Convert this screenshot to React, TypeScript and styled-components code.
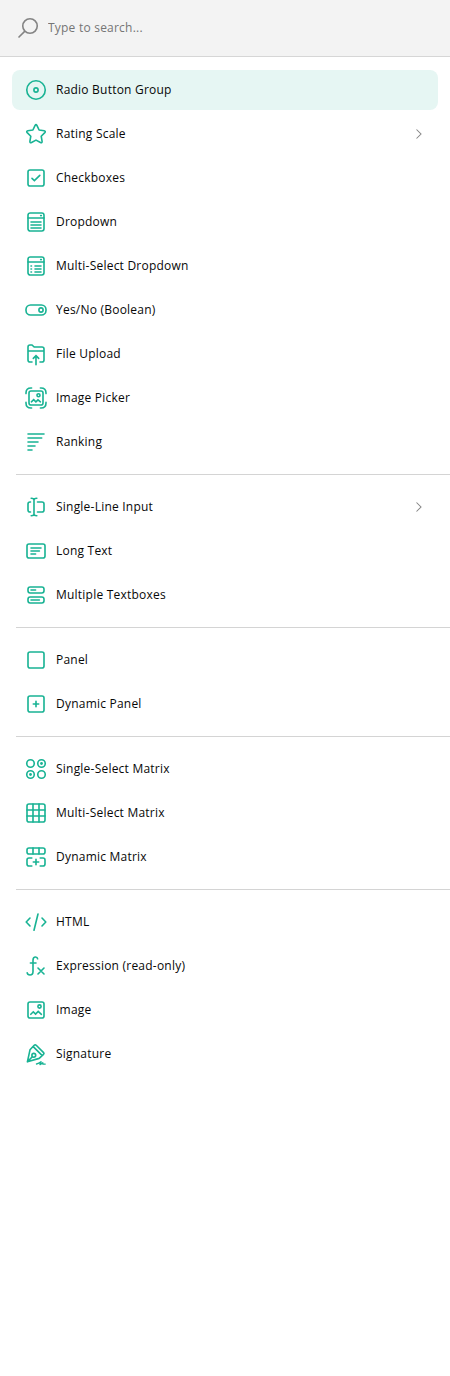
import React from 'react';
import styled, { createGlobalStyle } from 'styled-components';

const GlobalStyle = createGlobalStyle`
  * { box-sizing: border-box; }
  body { margin: 0; background: #fff; }
`;

const Toolbox = styled.div`
  width: 100%;
  min-height: 100vh;
  background: #fff;
  font-family: 'Open Sans', sans-serif;
  font-size: 12px;
  letter-spacing: 0.22px;
  color: #080808;
`;

const SearchBar = styled.label`
  display: flex;
  align-items: center;
  gap: 8px;
  height: 57px;
  padding: 0 16px 1px;
  background: #f3f3f3;
  border-bottom: 1px solid #d6d6d6;
`;

const SearchIcon = styled.svg`
  width: 24px;
  height: 24px;
  fill: none;
  stroke: #848484;
  stroke-width: 1.6;
`;

const SearchInput = styled.input`
  flex: 1;
  padding: 0;
  border: 0;
  outline: 0;
  background: transparent;
  font: inherit;
  letter-spacing: inherit;
  line-height: 18px;
  &::placeholder { color: #757575; opacity: 1; }
`;

const Categories = styled.nav`
  padding-top: 13px;
`;

const Category = styled.ul`
  display: flex;
  flex-direction: column;
  gap: 4px;
  margin: 0;
  padding: 0 12px;
  list-style: none;
`;

const Separator = styled.hr`
  height: 1px;
  margin: 12px 0 12px 16px;
  border: 0;
  background: #d4d4d4;
`;

const Item = styled.li<{ $active?: boolean }>`
  display: flex;
  align-items: center;
  gap: 8px;
  height: 40px;
  padding: 0 12px;
  border-radius: 8px;
  background: ${(p) => (p.$active ? '#e6f6f3' : 'transparent')};
`;

const ItemIcon = styled.svg`
  flex: none;
  width: 24px;
  height: 24px;
  fill: none;
  stroke: #19b394;
  stroke-width: 1.62;
  stroke-linecap: round;
`;

const Title = styled.span`
  flex: 1;
  line-height: 18px;
  white-space: nowrap;
`;

const Chevron = styled.svg`
  flex: none;
  width: 16px;
  height: 16px;
  fill: none;
  stroke: #858585;
  stroke-width: 1.05;
`;

const icons: Record<string, React.ReactNode> = {
  radio: (<><circle cx="12" cy="12" r="9.25" /><circle cx="12" cy="12" r="2.1" /></>),
  rating: <path strokeLinejoin="round" d="M11.1 3.4Q12 1.9 12.9 3.4L15.1 8L20.2 8.8Q22 9.2 20.8 10.6L17.2 14.2L18.1 19.4Q18.2 21.2 16.5 20.5L12 18.1L7.5 20.5Q5.8 21.2 5.9 19.4L6.8 14.2L3.2 10.6Q2 9.2 3.8 8.8L8.9 8Z" />,
  checkbox: (<><rect x="4" y="4" width="16" height="16" rx="2" /><path d="M8 12.3L10.4 14.6L15.8 9.3" /></>),
  dropdown: (<><rect x="4" y="3" width="16" height="18" rx="2.25" /><path d="M4 8H20M7 12H17M7 15H17M7 18H17" /><path d="M16.7 5.6H17.3" /></>),
  tagbox: (<><rect x="4" y="3" width="16" height="18" rx="2.25" /><path d="M4 8H20M7 12H7.5M7 15H7.5M7 18H7.5M11 12H17M11 15H17M11 18H17" /><path d="M16.7 5.6H17.3" /></>),
  boolean: (<><rect x="2" y="7" width="20" height="10" rx="4.6" /><circle cx="17" cy="12" r="2.1" /></>),
  file: <path d="M8 20H6Q4 20 4 18V5Q4 3 6 3H8L10.2 5H18Q20 5 20 7V18Q20 20 18 20H16M4 9H20M12 22.8V13.7M9.3 16.4L12 13.7L14.7 16.4" />,
  imagepicker: (<><path d="M2 7.6V7Q2 2 7 2H7.6M16.4 2H17Q22 2 22 7V7.6M22 16.4V17Q22 22 17 22H16.4M7.6 22H7Q2 22 2 17V16.4" /><rect x="5" y="5" width="14" height="14" rx="2" /><circle cx="14.5" cy="9.2" r="1.5" /><path d="M7.4 15.8L9.7 13.7L11.9 15.8L14 13.8L16.4 15.8" /></>),
  ranking: <path d="M4 4H20M4 8H17.7M4 12H14M4 16H11M4 20H8" />,
  text: <path d="M6.5 7H6Q4 7 4 9V15Q4 17 6 17H6.5M13.5 7H18Q20 7 20 9V15Q20 17 18 17H13.5M10 4V20M7.2 3.3Q10 3.3 10 5Q10 3.3 12.8 3.3M7.2 20.7Q10 20.7 10 19Q10 20.7 12.8 20.7" />,
  comment: (<><rect x="3" y="5" width="18" height="14" rx="2" /><path d="M7 9H17M7 12H15.4M7 15H11.6" /></>),
  multitext: (<><rect x="4" y="4" width="16" height="6" rx="2.2" /><rect x="4" y="14" width="16" height="6" rx="2.2" /><path d="M7 7H11.6M7 17H15.4" /></>),
  panel: <rect x="4" y="4" width="16" height="16" rx="2" />,
  paneldynamic: (<><rect x="4" y="4" width="16" height="16" rx="2" /><path d="M12 9.3V14.7M9.3 12H14.7" /></>),
  matrix: (<><circle cx="6.5" cy="6.5" r="3.75" /><circle cx="17.5" cy="6.5" r="3.75" /><circle cx="6.5" cy="17.5" r="3.75" /><circle cx="17.5" cy="17.5" r="3.75" /><circle cx="17.5" cy="6.5" r="1.4" fill="#19b394" stroke="none" /><circle cx="6.5" cy="17.5" r="1.4" fill="#19b394" stroke="none" /></>),
  matrixdropdown: (<><rect x="3" y="3" width="18" height="18" rx="2" /><path d="M9 3V21M15 3V21M3 9H21M3 15H21" /></>),
  matrixdynamic: (<><rect x="3" y="3" width="18" height="6" rx="2" /><path d="M9 3V9M15 3V9M7.8 13H5Q3 13 3 15V19Q3 21 5 21H7.8M16.2 13H19Q21 13 21 15V19Q21 21 19 21H16.2M12 14.3V19.7M9.3 17H14.7" /></>),
  html: <path strokeLinejoin="round" d="M6 8L2.2 12L6 16M18 8L21.8 12L18 16M14 4L10 20.2" />,
  expression: <path d="M13.6 4.8Q13.4 3 11.6 3Q9 3 9 6.2V17.5Q9 21 6 21Q3.4 21 3.2 18.8M6.4 9H12M14 14L20 20M20 14L14 20" />,
  image: (<><rect x="4" y="4" width="16" height="16" rx="2" /><circle cx="15.5" cy="8.5" r="1.6" /><path d="M6.8 16.3L9.3 13.8L11.6 16L14.2 13.4L17.4 16.3" /></>),
  signature: (<><path strokeLinejoin="round" d="M10.2 3.3Q11.2 2.3 12.2 3.3L19.6 10.6Q20.4 11.5 19.5 12.3L15.2 16.4L3.4 19.8L6 7.8ZM9.2 4.6L18 13.4M3.6 19.6L8.3 14.8" /><circle cx="9.8" cy="13.3" r="1.9" /><path strokeWidth="1.4" strokeLinejoin="round" d="M12.5 22Q15 21.6 17 19.8L16 22.6L18.8 20.8L18.8 22.1H21.2" /></>),
};

type Entry = { icon: string; title: string; active?: boolean; nested?: boolean };

const categories: Entry[][] = [
  [
    { icon: 'radio', title: 'Radio Button Group', active: true },
    { icon: 'rating', title: 'Rating Scale', nested: true },
    { icon: 'checkbox', title: 'Checkboxes' },
    { icon: 'dropdown', title: 'Dropdown' },
    { icon: 'tagbox', title: 'Multi-Select Dropdown' },
    { icon: 'boolean', title: 'Yes/No (Boolean)' },
    { icon: 'file', title: 'File Upload' },
    { icon: 'imagepicker', title: 'Image Picker' },
    { icon: 'ranking', title: 'Ranking' },
  ],
  [
    { icon: 'text', title: 'Single-Line Input', nested: true },
    { icon: 'comment', title: 'Long Text' },
    { icon: 'multitext', title: 'Multiple Textboxes' },
  ],
  [
    { icon: 'panel', title: 'Panel' },
    { icon: 'paneldynamic', title: 'Dynamic Panel' },
  ],
  [
    { icon: 'matrix', title: 'Single-Select Matrix' },
    { icon: 'matrixdropdown', title: 'Multi-Select Matrix' },
    { icon: 'matrixdynamic', title: 'Dynamic Matrix' },
  ],
  [
    { icon: 'html', title: 'HTML' },
    { icon: 'expression', title: 'Expression (read-only)' },
    { icon: 'image', title: 'Image' },
    { icon: 'signature', title: 'Signature' },
  ],
];

export default function App() {
  return (
    <>
      <GlobalStyle />
      <Toolbox>
        <SearchBar>
          <SearchIcon viewBox="0 0 24 24">
            <circle cx="14" cy="10" r="7.25" />
            <path d="M8.9 15.1L2.5 21.5" />
          </SearchIcon>
          <SearchInput placeholder="Type to search..." />
        </SearchBar>
        <Categories>
          {categories.map((items, index) => (
            <React.Fragment key={index}>
              {index > 0 && <Separator />}
              <Category>
                {items.map((item) => (
                  <Item key={item.icon} $active={item.active}>
                    <ItemIcon viewBox="0 0 24 24">{icons[item.icon]}</ItemIcon>
                    <Title>{item.title}</Title>
                    {item.nested && (
                      <Chevron viewBox="0 0 16 16">
                        <path d="M6.5 3.5L11 8L6.5 12.5" />
                      </Chevron>
                    )}
                  </Item>
                ))}
              </Category>
            </React.Fragment>
          ))}
        </Categories>
      </Toolbox>
    </>
  );
}
